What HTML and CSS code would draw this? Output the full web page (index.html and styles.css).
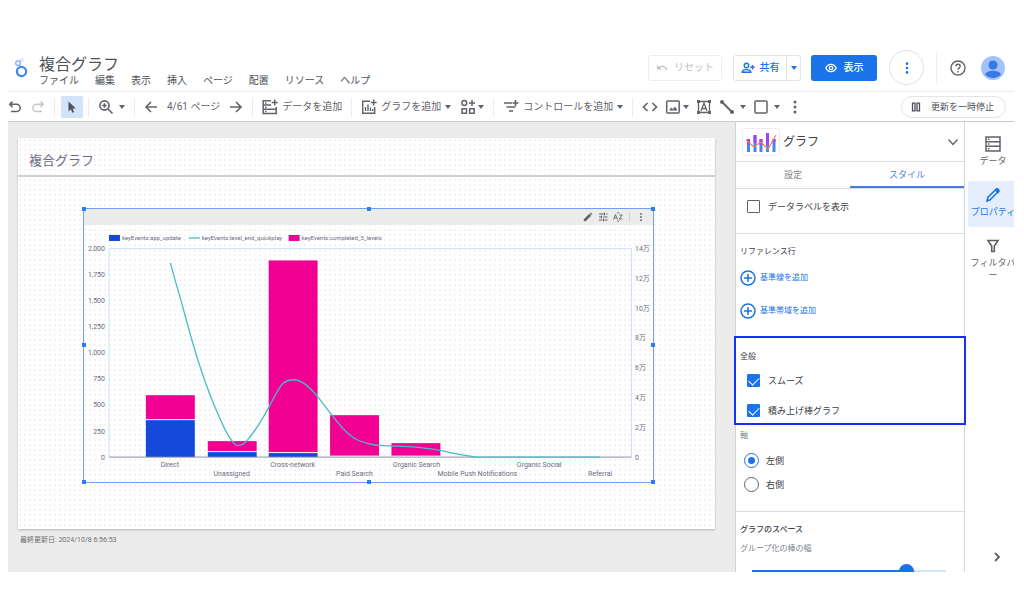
FILE: index.html
```html
<!DOCTYPE html>
<html lang="ja">
<head>
<meta charset="utf-8">
<title>複合グラフ</title>
<link rel="stylesheet" href="styles.css">
</head>
<body>
<svg class="defs" aria-hidden="true">
  <symbol id="dots" viewBox="0 0 16 16"><g fill="currentColor"><circle cx="8" cy="3" r="1.500"/><circle cx="8" cy="8" r="1.500"/><circle cx="8" cy="13" r="1.500"/></g></symbol>
  <symbol id="plus-circle" viewBox="0 0 16 16"><path d="M8 1a7 7 0 1 0 0 14A7 7 0 0 0 8 1zM8 4v8M4 8h8" fill="none" stroke="currentColor" stroke-width="1.500"/></symbol>
</svg>
<div class="app">
  <header class="header">
    <svg class="logo" viewBox="0 0 14 22"><circle cx="7.500" cy="14.500" r="4.600" fill="none" stroke="#4285f4" stroke-width="2.200"/><circle cx="4" cy="6.200" r="2.300" fill="none" stroke="#78a9f8" stroke-width="1.300"/><circle cx="7.500" cy="3" r="1.400" fill="none" stroke="#bcd4fb" stroke-width="1"/></svg>
    <div class="doc">
      <h1 class="doc-title">複合グラフ</h1>
      <nav class="menus">
        <button>ファイル</button><button>編集</button><button>表示</button><button>挿入</button><button>ページ</button><button>配置</button><button>リソース</button><button>ヘルプ</button>
      </nav>
    </div>
    <div class="actions">
      <button class="btn reset" disabled><svg class="i12" viewBox="0 0 12 12"><path d="M1 3v4.500h4.500L3.900 5.900C6 4.300 9 4.800 10.200 8.200l1.300-.5C10 3.500 6 2.500 3 5z" fill="currentColor"/></svg>リセット</button>
      <div class="split">
        <button class="share"><svg class="i14" viewBox="0 0 14 14" fill="none" stroke="currentColor" stroke-width="1.400"><circle cx="5.500" cy="4.500" r="2.200"/><path d="M1.200 11.300c0-3.600 8.600-3.600 8.600 0zM11.500 4v4.500M9.300 6.200h4.400"/></svg>共有</button>
        <button class="share-more" aria-label="共有オプション"><span class="caret"></span></button>
      </div>
      <button class="btn view"><svg class="i12" viewBox="0 0 14 14" fill="none" stroke="currentColor" stroke-width="1.500"><path d="M1 7c2.400-5.500 9.600-5.500 12 0-2.400 5.500-9.600 5.500-12 0z"/><circle cx="7" cy="7" r="2"/></svg>表示</button>
      <button class="round" aria-label="その他"><svg class="i16"><use href="#dots"/></svg></button>
      <span class="header-rule"></span>
      <button class="help" aria-label="ヘルプ"><svg class="i16" viewBox="0 0 16 16" fill="none" stroke="currentColor" stroke-width="1.400"><circle cx="8" cy="8" r="7"/><path d="M5.900 6.300c0-2.800 4.300-2.800 4.300 0C10.200 7.800 8 7.900 8 9.700M8 11v1.500"/></svg></button>
      <button class="avatar" aria-label="アカウント"><svg viewBox="0 0 24 24"><circle cx="12" cy="12" r="12" fill="#a1c2fa"/><circle cx="12" cy="9" r="4.500" fill="#3b78e7"/><path d="M4 18.500c2-5 14-5 16 0a11 11 0 0 1-16 0z" fill="#3b78e7"/></svg></button>
    </div>
  </header>

  <div class="toolbar">
    <div class="group wide">
      <button aria-label="元に戻す"><svg class="i14" viewBox="0 0 14 14" fill="none" stroke="currentColor" stroke-width="1.600"><path d="M4.500 1.500 1.800 4.300l2.700 2.800M2 4.300h6.500a3.600 3.600 0 0 1 0 7.200H3"/></svg></button>
      <button class="faint" aria-label="やり直す"><svg class="i14" viewBox="0 0 14 14" fill="none" stroke="currentColor" stroke-width="1.400"><path d="m9.500 1.500 2.700 2.800-2.700 2.800M12 4.300H5.500a3.600 3.600 0 0 0 0 7.200H11"/></svg></button>
    </div>
    <span class="rule before-tool"></span>
    <button class="tool-on" aria-label="選択"><svg class="i14" viewBox="0 0 14 14"><path d="M3.500 1.500v10l2.400-2.200 1.500 3.400 1.700-.8-1.500-3.300h3.300z" fill="#4d5156"/></svg></button>
    <span class="rule after-tool"></span>
    <button class="roomy" aria-label="ズーム"><svg class="i16" viewBox="0 0 16 16" fill="none" stroke="currentColor" stroke-width="1.600"><circle cx="6.500" cy="6.500" r="4.600"/><path d="m10 10 4.500 4.500M6.500 4.300v4.400M4.300 6.500h4.400"/></svg><span class="caret"></span></button>
    <span class="rule"></span>
    <div class="group wide">
      <button aria-label="前のページ"><svg class="i14" viewBox="0 0 14 14" fill="none" stroke="currentColor" stroke-width="1.600"><path d="M13 7H2M7 2 2 7l5 5"/></svg></button>
      <span class="page-no">4/61 ページ</span>
      <button aria-label="次のページ"><svg class="i14" viewBox="0 0 14 14" fill="none" stroke="currentColor" stroke-width="1.600"><path d="M1 7h11M7 2l5 5-5 5"/></svg></button>
    </div>
    <span class="rule"></span>
    <button><svg class="i16" viewBox="0 0 16 16" fill="none" stroke="currentColor" stroke-width="1.500"><path d="M9 1.700H1.200v12.800h13V8M1.200 6H9M1.200 10.200h13M12.700.5v6M9.700 3.500h6"/><path d="M3 4h1.500M3 8.200h1.500M3 12.400h1.500"/></svg>データを追加</button>
    <span class="rule"></span>
    <div class="group wide">
      <button><svg class="i16" viewBox="0 0 16 16" fill="none" stroke="currentColor" stroke-width="1.400"><path d="M9 2.200H1.700v12h12V8M12.700.5v6M9.700 3.500h6M4.500 12V8M7 12V5.500M9.500 12V8.500M11.800 12v-2"/></svg>グラフを追加<span class="caret"></span></button>
      <button class="snug" aria-label="コミュニティ視覚化"><svg class="i16" viewBox="0 0 16 16" fill="none" stroke="currentColor" stroke-width="1.500"><circle cx="4.300" cy="4" r="2.400"/><path d="M12 1v6M9 4h6M2 9.800h4.500v4.500H2zM9.700 9.800h4.500v4.500H9.700z"/></svg><span class="caret"></span></button>
    </div>
    <span class="rule"></span>
    <button><svg class="i16" viewBox="0 0 16 16" fill="none" stroke="currentColor" stroke-width="1.600"><path d="M1 4h8M3.500 8h9M6 12h4M12.500 1v6M9.500 4h6"/></svg>コントロールを追加<span class="caret"></span></button>
    <span class="rule"></span>
    <div class="group">
      <button aria-label="URL の埋め込み"><svg class="i16" viewBox="0 0 16 16" fill="none" stroke="currentColor" stroke-width="1.600"><path d="M5.500 4 1.500 8l4 4M10.500 4l4 4-4 4"/></svg></button>
      <button class="snug" aria-label="画像"><svg class="i16" viewBox="0 0 16 16"><rect x="1.700" y="2" width="12.500" height="12" rx="1" fill="none" stroke="currentColor" stroke-width="1.500"/><path d="m4 11.500 2.200-3 1.600 1.800L10 7.500l2.500 4z" fill="currentColor"/></svg><span class="caret"></span></button>
      <button aria-label="テキスト"><svg class="i16" viewBox="0 0 16 16"><path d="M2.500 2.500h11v11h-11zM5 12l3-8 3 8M6 9.500h4" fill="none" stroke="currentColor" stroke-width="1.300"/><path d="M1 1h3v3H1zM12 1h3v3h-3zM1 12h3v3H1zM12 12h3v3h-3z" fill="currentColor"/></svg></button>
      <button class="roomy" aria-label="線"><svg class="i16" viewBox="0 0 16 16" fill="currentColor"><path d="m3 3 10 10" stroke="currentColor" stroke-width="1.800"/><circle cx="3" cy="3" r="2"/><circle cx="13" cy="13" r="2"/></svg><span class="caret"></span></button>
      <button class="roomy" aria-label="図形"><svg class="i16" viewBox="0 0 16 16"><rect x="2" y="2" width="12" height="12" rx="1" fill="none" stroke="currentColor" stroke-width="1.500"/></svg><span class="caret"></span></button>
      <button aria-label="その他のツール"><svg class="i16"><use href="#dots"/></svg></button>
    </div>
    <button class="pause"><svg class="i10" viewBox="0 0 10 10" fill="none" stroke="currentColor" stroke-width="1.300"><path d="M1.500 1.200H4v7.600H1.500zM6 1.200h2.500v7.600H6z"/></svg>更新を一時停止</button>
  </div>

  <div class="workspace">
    <main class="canvas">
      <section class="sheet">
        <h2 class="sheet-title">複合グラフ</h2>
        <div class="widget">
          <div class="widget-bar">
            <button aria-label="編集"><svg class="i10" viewBox="0 0 10 10"><path d="M.8 9.200V7.300l5.500-5.500 1.900 1.900-5.500 5.500zM6.900 1.200l.8-.7 1.800 1.800-.7.800z" fill="currentColor"/></svg></button>
            <button aria-label="調整"><svg class="i10" viewBox="0 0 10 10" fill="none" stroke="currentColor" stroke-width="1"><path d="M1 2h5M8 2h1.500M1 5h2M5 5h4.500M1 8h3.500M6.500 8h3M6.500.7v2.600M3.500 3.700v2.600M5.500 6.700v2.600"/></svg></button>
            <button aria-label="並べ替え"><svg class="i10" viewBox="0 0 10 10" fill="none" stroke="currentColor" stroke-width=".9"><path d="m.5 7.500 2-5 2 5M1.200 6h2.600M6.200 3h3l-3 4h3.200M4 1.500 5.200.4l1.200 1.100M4 8.500l1.200 1.100 1.200-1.100"/></svg></button>
            <span class="rule"></span>
            <button aria-label="グラフのメニュー"><svg class="i10"><use href="#dots"/></svg></button>
          </div>
          <svg class="chart" viewBox="0 16 570 257" role="img" aria-label="複合グラフ">
            <g class="legend">
              <rect x="25" y="26" width="11" height="6" fill="#1549dc"/><text x="38" y="31">keyEvents:app_update</text>
              <path d="M105 29h11" class="series"/><text x="118" y="31">keyEvents:level_end_quickplay</text>
              <rect x="205" y="26" width="11" height="6" fill="#f20094"/><text x="218" y="31">keyEvents:completed_5_levels</text>
            </g>
            <path class="plot" d="M25 248V39.500H548.500V248"/>
            <g class="left">
              <text x="21" y="42">2,000</text><text x="21" y="68">1,750</text><text x="21" y="94">1,500</text><text x="21" y="120">1,250</text><text x="21" y="146">1,000</text><text x="21" y="172">750</text><text x="21" y="198">500</text><text x="21" y="225">250</text><text x="21" y="251">0</text>
            </g>
            <g>
              <text x="552" y="42">14万</text><text x="552" y="72">12万</text><text x="552" y="102">10万</text><text x="552" y="131">8万</text><text x="552" y="161">6万</text><text x="552" y="191">4万</text><text x="552" y="221">2万</text><text x="552" y="251">0</text>
            </g>
            <g fill="#f20094">
              <rect x="62" y="186.500" width="49" height="24"/><rect x="124" y="232.500" width="49" height="10"/><rect x="185" y="51.500" width="49" height="192"/><rect x="246.500" y="206.500" width="49" height="40.500"/><rect x="308" y="234.500" width="49" height="12.500"/>
            </g>
            <g fill="#1549dc">
              <rect x="62" y="211.500" width="49" height="37"/><rect x="124" y="243.500" width="49" height="5"/><rect x="185" y="244.500" width="49" height="4"/>
            </g>
            <path class="axis" d="M25 248.500H548.500"/>
            <path class="series" d="M86.500 54C90 67 94 81 97 91C103 113 108 132 114 151C120 170 124 181 129 193C136 210 141 222 146 229C150 235 152 237 154 237C158 237 161 235 164 231C172 222 179 210 185 199C190 189 195 179 199 175C203 171.500 207 171 210 171C218 171 226 178 234 188C239 194 243 200 248 206C254 214 260 222 266 226C271 231 277 233 283 234.500C288 236 294 237 299 237L326 238C338 239 347 240 358 242C370 245 382 247 393 248.500H517"/>
            <g class="cats">
              <text x="86" y="258">Direct</text><text x="148" y="267">Unassigned</text><text x="209" y="258">Cross-network</text><text x="271" y="267">Paid Search</text><text x="333" y="258">Organic Search</text><text x="394" y="267">Mobile Push Notifications</text><text x="456" y="258">Organic Social</text><text x="517" y="267">Referral</text>
            </g>
          </svg>
          <i class="handle h-l v-t"></i><i class="handle h-c v-t"></i><i class="handle h-r v-t"></i><i class="handle h-l v-m"></i><i class="handle h-r v-m"></i><i class="handle h-l v-b"></i><i class="handle h-c v-b"></i><i class="handle h-r v-b"></i>
        </div>
      </section>
      <p class="updated">最終更新日: 2024/10/8 6:56:53</p>
    </main>

    <aside class="panel">
      <button class="panel-head">
        <span class="thumb"><svg viewBox="0 0 32 24"><path d="M3.500 9v13M10 5v17M16 9v13M22.500 3v19M29 9v13" stroke="#4285f4" stroke-width="3"/><path d="M3.500 9v5M10 5v8M16 9v6M22.500 3v12M29 9v3" stroke="#a142f4" stroke-width="3"/><path d="m1 10 8 7 6.500-5L23 19l8-14" fill="none" stroke="#fa7b4a" stroke-width="1.200"/></svg></span>
        <span class="panel-title">グラフ</span>
        <svg class="i12" viewBox="0 0 12 12"><path d="m1.500 3.500 4.500 5 4.500-5" fill="none" stroke="currentColor" stroke-width="1.300"/></svg>
      </button>
      <div class="tabs" role="tablist"><button role="tab">設定</button><button role="tab" class="on" aria-selected="true">スタイル</button></div>
      <section class="sec labels"><label class="check"><input type="checkbox">データラベルを表示</label></section>
      <section class="sec refs">
        <h3>リファレンス行</h3>
        <button class="add"><svg class="i16"><use href="#plus-circle"/></svg>基準線を追加</button>
        <button class="add"><svg class="i16"><use href="#plus-circle"/></svg>基準帯域を追加</button>
      </section>
      <section class="sec general">
        <h3>全般</h3>
        <label class="check"><input type="checkbox" checked>スムーズ</label>
        <label class="check"><input type="checkbox" checked>積み上げ棒グラフ</label>
      </section>
      <section class="sec axes">
        <h3 class="light">軸</h3>
        <label class="radio"><input type="radio" name="axis" checked>左側</label>
        <label class="radio"><input type="radio" name="axis">右側</label>
      </section>
      <section class="sec spacing">
        <h3 class="strong">グラフのスペース</h3>
        <label class="light" for="bar-width">グループ化の棒の幅</label>
        <input id="bar-width" class="slider" type="range" min="0" max="100" value="82">
      </section>
    </aside>

    <nav class="rail">
      <button><svg class="i18" viewBox="0 0 18 18" fill="none" stroke="currentColor" stroke-width="1.500"><path d="M2 2h14v14H2zM2 6.700h14M2 11.300h14"/><path d="M4 4.300h1.500M4 9h1.500M4 13.700h1.500"/></svg>データ</button>
      <button class="on"><svg class="i18" viewBox="0 0 18 18" fill="none" stroke="currentColor" stroke-width="1.500"><path d="m3 15 .8-3.500 8-8c1-1 1.700-1 2.500-.2s.8 1.500-.2 2.500l-8 8z"/><path d="m11.500 4 2.500 2.500 1-1.500-2-2z" fill="currentColor"/></svg>プロパティ</button>
      <button><svg class="i18" viewBox="0 0 18 18" fill="none" stroke="currentColor" stroke-width="1.600"><path d="M4 3.500h10L10.300 9v5.500H7.700V9z"/></svg>フィルタバー</button>
      <button class="collapse" aria-label="折りたたむ"><svg class="i12" viewBox="0 0 12 12"><path d="m4 2 4 4-4 4" fill="none" stroke="currentColor" stroke-width="1.800"/></svg></button>
    </nav>
  </div>
</div>
</body>
</html>
```

FILE: styles.css
```css
* { box-sizing: border-box; }
body {
  margin: 0;
  height: 100vh;
  padding: 44px 10px 42px 8px;
  background: #fff;
  color: #5f6368;
  font: 10px/12px Roboto, "Noto Sans CJK JP", sans-serif;
}
button {
  display: flex;
  align-items: center;
  gap: 4px;
  padding: 0;
  border: 0;
  background: none;
  color: inherit;
  font: inherit;
  white-space: nowrap;
}
svg { display: block; flex: none; }
h1, h2, h3, p { margin: 0; font-weight: 400; }
.defs { position: absolute; width: 0; height: 0; }
.i10 { width: 10px; height: 10px; }
.i12 { width: 12px; height: 12px; }
.i14 { width: 14px; height: 14px; }
.i16 { width: 16px; height: 16px; }
.i18 { width: 18px; height: 18px; }
.caret {
  border: 3px solid transparent;
  border-top: 4px solid currentColor;
  border-bottom: 0;
}
.app { display: flex; flex-direction: column; height: 100%; overflow: hidden; }

.header {
  display: flex;
  align-items: center;
  height: 48px;
  flex: none;
  padding: 0 9px 0 6px;
  border-bottom: 1px solid #e8eaed;
}
.logo { width: 14px; height: 22px; }
.doc { padding: 7px 0 0 11px; }
.doc-title { color: #4d5156; font-size: 16px; line-height: 20px; }
.menus { display: flex; gap: 16px; color: #4d5156; }
.actions { display: flex; align-items: center; margin-left: auto; }
.btn { height: 26px; justify-content: center; border-radius: 3px; }
.reset { width: 74px; gap: 6px; margin-right: 11px; border: 1px solid #eceef0; color: #bdc1c6; }
.split { display: flex; height: 26px; margin-right: 10px; border: 1px solid #e3e5e8; border-radius: 3px; color: #1a73e8; font-weight: 500; }
.share { width: 52px; justify-content: center; gap: 5px; }
.share-more { width: 14px; justify-content: center; border-left: 1px solid #e3e5e8; }
.view { width: 66px; gap: 7px; margin-right: 12px; background: #1a73e8; color: #fff; font-weight: 500; }
.round { justify-content: center; width: 35px; height: 35px; border: 1px solid #dfe1e5; border-radius: 50%; color: #1a73e8; }
.round svg { width: 14px; height: 14px; }
.header-rule { width: 1px; height: 32px; margin: 0 13px 0 12px; background: #eceef0; }
.avatar { margin-left: 15px; }
.avatar svg { width: 24px; height: 24px; }

.toolbar {
  display: flex;
  align-items: center;
  flex: none;
  height: 30px;
  padding-right: 8px;
  border-bottom: 1px solid #c9cbcd;
}
.group { display: flex; align-items: center; gap: 7px; }
.wide { gap: 9px; }
.snug { gap: 2px; }
.roomy { gap: 5px; }
.rule { width: 1px; height: 18px; margin: 0 9px; background: #e8eaed; }
.before-tool { margin-right: 6px; }
.after-tool { margin-left: 5px; }
.tool-on { justify-content: center; width: 22px; height: 22px; background: #d2e3fc; border-radius: 2px; }
.faint { color: #c4c7ca; }
.pause {
  gap: 10px;
  height: 22px;
  margin-left: auto;
  padding: 0 11px 0 9px;
  border: 1px solid #e3e5e8;
  border-radius: 11px;
  color: #4d5156;
  font-size: 9px;
}

.workspace { display: flex; flex: 1; min-height: 0; }
.canvas { flex: 1; min-width: 0; padding: 16px 20px 0 10px; background: #ececec; }
.sheet {
  padding-bottom: 47px;
  background: radial-gradient(circle at 2px 2px, #f3f3f5 1px, transparent 1px) 0 0 / 5px 5px #fff;
  box-shadow: 0 1px 2px #b5b5b5;
}
.sheet-title {
  padding: 13px 11px 4px;
  border-bottom: 2px solid #d0d0d0;
  color: #6c6c80;
  font-size: 13px;
  line-height: 20px;
}
.widget { position: relative; margin: 32px 62px 0 66px; box-shadow: 0 0 0 1px #6aa0f5; }
.widget-bar { display: flex; align-items: center; justify-content: flex-end; gap: 5px; height: 16px; padding-right: 7px; background: #ececec; }
.widget-bar .rule { height: 10px; margin: 0 1px; background: #d0d0d0; }
.chart { width: 100%; height: auto; fill: #6c6c80; font-size: 7px; }
.legend { font-size: 6px; }
.left { text-anchor: end; }
.cats { text-anchor: middle; }
.plot { fill: none; stroke: #cfe0fb; stroke-width: 1; }
.axis { stroke: #8a8fa8; stroke-width: 1; }
.series { fill: none; stroke: #46bdc6; stroke-width: 1.3; }
.handle { position: absolute; width: 4px; height: 4px; background: #2f7de9; }
.h-l { left: -2px; }
.h-c { left: calc(50% - 2px); }
.h-r { right: -2px; }
.v-t { top: -2px; }
.v-m { top: calc(50% - 2px); }
.v-b { bottom: -2px; }
.updated { padding: 6px 2px; font-size: 7px; line-height: 10px; color: #6c6c6c; }

.panel {
  display: flex;
  flex-direction: column;
  flex: none;
  width: 230px;
  border-left: 1px solid #cfd1d4;
  border-right: 1px solid #d5d7da;
  font-size: 9px;
}
.panel > * { flex: none; }
.panel-head { gap: 3px; height: 40px; padding: 0 5px 0 6px; border-bottom: 1px solid #dadce0; text-align: left; }
.thumb { padding: 1px 2px; border: 1px solid #eceef0; border-radius: 3px; }
.thumb svg { width: 32px; height: 24px; }
.panel-title { flex: 1; color: #3c4043; font-size: 12px; line-height: 16px; }
.tabs { display: grid; grid-template-columns: 1fr 1fr; height: 27px; border-bottom: 1px solid #dadce0; }
.tabs button { justify-content: center; color: #80868b; border-bottom: 2px solid transparent; padding-top: 2px; }
.tabs .on { color: #4a7fe0; border-color: #4a7bdc; }
.sec { display: flex; flex-direction: column; align-items: flex-start; padding: 0 4px; color: #3c4043; }
.sec h3 { font-size: 8px; line-height: 12px; }
.sec .strong { font-weight: 500; }
.sec .light { color: #80868b; font-size: 8px; }
.check, .radio { display: flex; align-items: center; gap: 8px; }
.check { padding-left: 7px; }
.radio { gap: 7px; padding-left: 4px; }
.check input, .radio input { display: grid; place-content: center; flex: none; margin: 0; appearance: none; }
.check input { width: 13px; height: 13px; border: 1px solid #5f6368; border-radius: 1px; }
.check input:checked { border-color: #1a73e8; background: #1a73e8; }
.check input:checked::before {
  content: "";
  width: 9px;
  height: 5px;
  margin-bottom: 2px;
  border: solid #fff;
  border-width: 0 0 1px 1px;
  transform: rotate(-45deg);
}
.radio input { width: 15px; height: 15px; border: 1px solid #5f6368; border-radius: 50%; }
.radio input:checked { border-color: #1a73e8; }
.radio input:checked::before { content: ""; width: 7px; height: 7px; border-radius: 50%; background: #1a73e8; }
.labels { height: 45px; padding-top: 11px; border-bottom: 1px solid #dadce0; }
.refs { gap: 17px; padding-top: 12px; padding-bottom: 19px; }
.refs h3 { margin-bottom: -5px; }
.add { color: #1a73e8; font-size: 8px; }
.general { position: relative; gap: 17px; padding-top: 13px; padding-bottom: 6px; outline: 2px solid #1432f5; }
.general h3 { margin-bottom: -6px; }
.axes { gap: 9px; padding-top: 7px; padding-bottom: 19px; border-bottom: 1px solid #dadce0; }
.axes h3 { margin-bottom: 2px; }
.spacing { gap: 7px; padding-top: 12px; }
.slider {
  width: 194px;
  height: 15px;
  margin: 2px 0 0 12px;
  appearance: none;
  background: linear-gradient(90deg, #1a73e8 80%, #d2e3fc 80%) center / 100% 3px no-repeat;
}
.slider::-webkit-slider-thumb { appearance: none; width: 15px; height: 15px; border-radius: 50%; background: #1a73e8; }

.rail {
  display: flex;
  flex-direction: column;
  align-items: stretch;
  flex: none;
  width: 49px;
  padding: 8px 0 8px 3px;
  gap: 5px;
  font-size: 9px;
  overflow: hidden;
}
.rail button { flex-direction: column; gap: 2px; width: 50px; height: 46px; padding-top: 5px; border-radius: 3px 0 0 3px; white-space: normal; }
.rail .on { background: #e4eefd; color: #1a73e8; }
.rail .collapse { height: 14px; margin-top: auto; padding: 1px 0 0 7px; }
```
